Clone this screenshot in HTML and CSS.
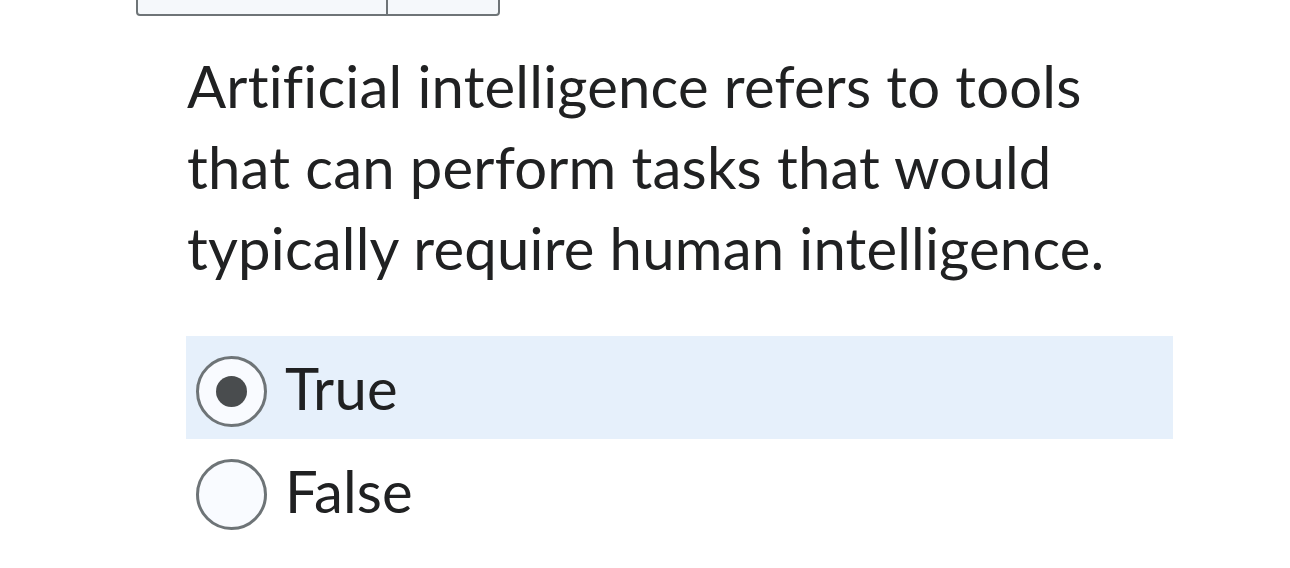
FILE: index.html
```html
<!DOCTYPE html>
<html>
<head>
<meta charset="utf-8">
<link rel="stylesheet" href="styles.css">
</head>
<body>
<div class="page">
  <div class="toolbar">
    <div class="tb-main"></div>
    <div class="tb-side"></div>
  </div>
  <div class="question">
    <p class="prompt">Artificial intelligence refers to tools that can perform tasks that would typically require human intelligence.</p>
    <div class="options">
      <label class="option selected">
        <span class="radio"><span class="dot"></span></span>
        <span class="label">True</span>
      </label>
      <label class="option">
        <span class="radio"></span>
        <span class="label">False</span>
      </label>
    </div>
  </div>
</div>
</body>
</html>
```
FILE: styles.css
```css
html, body {
  margin: 0;
  padding: 0;
  background: #ffffff;
}
body {
  font-family: Lato, "Noto Sans", sans-serif;
  color: #202122;
  font-variant-ligatures: none;
  letter-spacing: 0.2px;
}
.page {
  width: 1290px;
  height: 568px;
  overflow: hidden;
}
.toolbar {
  margin-left: 136px;
  margin-top: -40px;
  width: 364px;
  height: 56px;
  box-sizing: border-box;
  border: 2px solid #6e7477;
  border-radius: 4px;
  background: #f5f8fb;
  display: flex;
}
.tb-main {
  width: 248px;
  border-right: 2px solid #6e7477;
}
.tb-side {
  flex: 1;
}
.question {
  margin-left: 186px;
  width: 987px;
}
.prompt {
  margin: 29px 0 0 1px;
  font-size: 58px;
  line-height: 81px;
  width: 960px;
}
.options {
  margin-top: 48px;
  display: flex;
  flex-direction: column;
}
.option {
  height: 103px;
  display: flex;
  align-items: center;
  gap: 18px;
  padding-left: 10px;
}
.option.selected {
  background: #e6f0fb;
}
.radio {
  width: 71px;
  height: 71px;
  margin-top: 8px;
  box-sizing: border-box;
  border: 3px solid #6e7477;
  border-radius: 50%;
  background: #f9fbff;
  display: flex;
  align-items: center;
  justify-content: center;
}
.dot {
  width: 31px;
  height: 31px;
  border-radius: 50%;
  background: #494c4e;
}
.label {
  font-size: 58px;
  line-height: 1;
}
```
